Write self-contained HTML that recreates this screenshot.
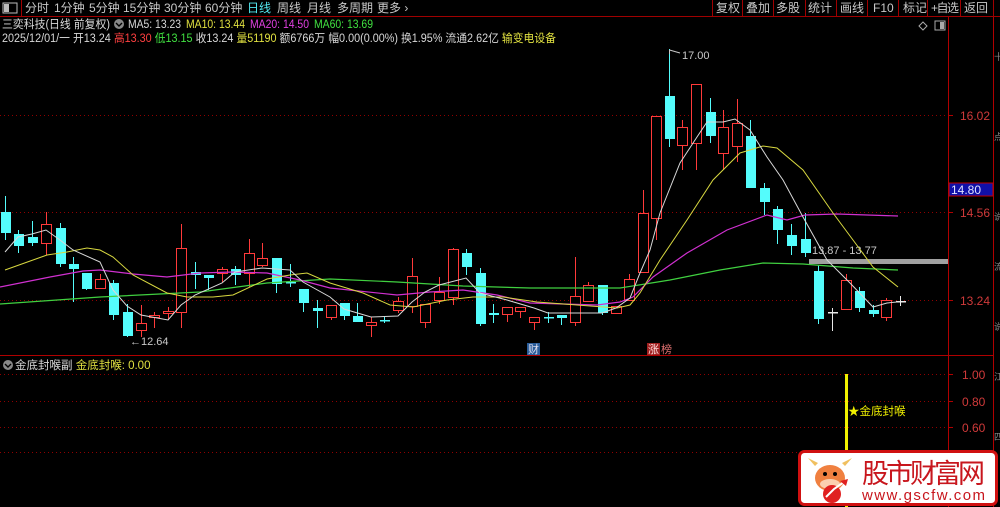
<!DOCTYPE html>
<html><head><meta charset="utf-8">
<style>
html,body{margin:0;padding:0;background:#000;width:1000px;height:507px;overflow:hidden;font-family:"Liberation Sans","Noto Sans CJK SC",sans-serif;}
#root{position:relative;width:1000px;height:507px;}
</style></head><body><div id="root">
<svg width="1000" height="507" style="position:absolute;left:0;top:0" xmlns="http://www.w3.org/2000/svg" font-family="Liberation Sans, Noto Sans CJK SC, sans-serif">
<rect x="0" y="0" width="1000" height="16" fill="#000"/>
<line x1="0" y1="16.5" x2="1000" y2="16.5" stroke="#a00000"/>
<rect x="3" y="3" width="14" height="10" fill="none" stroke="#bbb"/>
<rect x="4" y="4" width="5" height="8" fill="#bbb"/>
<line x1="21.5" y1="0" x2="21.5" y2="16" stroke="#a00000"/>
<g font-size="12" fill="#c8c8c8">
<text x="25" y="12">分时</text><text x="54" y="12">1分钟</text><text x="89" y="12">5分钟</text><text x="123" y="12">15分钟</text><text x="164" y="12">30分钟</text><text x="205" y="12">60分钟</text>
<text x="247" y="12" fill="#54e8f0">日线</text><text x="277" y="12">周线</text><text x="307" y="12">月线</text><text x="337" y="12">多周期</text><text x="377" y="12">更多 ›</text>
<text x="716" y="12">复权</text><text x="746" y="12">叠加</text><text x="776" y="12">多股</text><text x="808" y="12">统计</text><text x="840" y="12">画线</text><text x="873" y="12">F10</text><text x="903" y="12">标记</text><text x="931" y="12" textLength="28">+自选</text><text x="964" y="12">返回</text>
</g>
<g stroke="#a00000">
<line x1="712.5" y1="0" x2="712.5" y2="16"/><line x1="742.5" y1="0" x2="742.5" y2="16"/><line x1="773.5" y1="0" x2="773.5" y2="16"/><line x1="805.5" y1="0" x2="805.5" y2="16"/><line x1="836.5" y1="0" x2="836.5" y2="16"/><line x1="867.5" y1="0" x2="867.5" y2="16"/><line x1="898.5" y1="0" x2="898.5" y2="16"/><line x1="927.5" y1="0" x2="927.5" y2="16"/><line x1="960.5" y1="0" x2="960.5" y2="16"/><line x1="993.5" y1="0" x2="993.5" y2="16"/>
</g>
<g font-size="11.5">
<text x="2" y="28" fill="#d8d8d8" textLength="108" lengthAdjust="spacingAndGlyphs">三奕科技(日线 前复权)</text>
<circle cx="119" cy="24" r="5" fill="#888"/><path d="M116 23 L119 26 L122 23" stroke="#000" stroke-width="1.4" fill="none"/>
<text x="128" y="28" fill="#d8d8d8" textLength="53" lengthAdjust="spacingAndGlyphs">MA5: 13.23</text>
<text x="186" y="28" fill="#e0e040" textLength="59" lengthAdjust="spacingAndGlyphs">MA10: 13.44</text>
<text x="250" y="28" fill="#e040e0" textLength="59" lengthAdjust="spacingAndGlyphs">MA20: 14.50</text>
<text x="314" y="28" fill="#40e040" textLength="59" lengthAdjust="spacingAndGlyphs">MA60: 13.69</text>
<text x="2" y="42" fill="#d8d8d8" textLength="554" lengthAdjust="spacingAndGlyphs">2025/12/01/一 开13.24 <tspan fill="#ff4040">高13.30</tspan> <tspan fill="#40e040">低13.15</tspan> 收13.24 <tspan fill="#e0e040">量51190</tspan> 额6766万 幅0.00(0.00%) 换1.95% 流通2.62亿 <tspan fill="#e0e040">输变电设备</tspan></text>
</g>
<path d="M923 22 L927 26 L923 30 L919 26Z" fill="none" stroke="#aaa"/>
<rect x="935" y="21" width="10" height="9" fill="none" stroke="#aaa"/><rect x="940" y="22" width="4" height="7" fill="#aaa"/>
<line x1="948.5" y1="17" x2="948.5" y2="507" stroke="#b00000"/>
<line x1="993.5" y1="17" x2="993.5" y2="507" stroke="#b00000"/>
<line x1="0" y1="355.5" x2="993" y2="355.5" stroke="#b00000"/>
<g stroke="#900000" stroke-dasharray="1,3">
<line x1="0" y1="115.5" x2="948" y2="115.5"/><line x1="0" y1="212.5" x2="948" y2="212.5"/><line x1="0" y1="300.5" x2="948" y2="300.5"/>
<line x1="0" y1="374.5" x2="948" y2="374.5"/><line x1="0" y1="401.5" x2="948" y2="401.5"/><line x1="0" y1="427.5" x2="948" y2="427.5"/><line x1="0" y1="452.5" x2="948" y2="452.5"/>
</g>
<g stroke="#b00000"><line x1="948" y1="115.5" x2="953" y2="115.5"/><line x1="948" y1="212.5" x2="953" y2="212.5"/><line x1="948" y1="300.5" x2="953" y2="300.5"/><line x1="948" y1="374.5" x2="953" y2="374.5"/><line x1="948" y1="401.5" x2="953" y2="401.5"/><line x1="948" y1="427.5" x2="953" y2="427.5"/></g>
<g font-size="12" fill="#d03a3a">
<text x="960" y="120">16.02</text><text x="960" y="217">14.56</text><text x="960" y="305">13.24</text>
<text x="962" y="379">1.00</text><text x="962" y="406">0.80</text><text x="962" y="432">0.60</text>
</g>
<rect x="949" y="183" width="44" height="13" fill="#1010a8" stroke="#c00000"/>
<text x="951" y="194" font-size="12" fill="#e0e0ff">14.80</text>
<g font-size="9" fill="#888"><text x="994" y="60">十</text><text x="994" y="140">点</text><text x="994" y="220">说</text><text x="994" y="270">流</text><text x="994" y="330">说</text><text x="994" y="380">江</text><text x="994" y="440">四</text></g>
<rect x="809" y="259" width="139" height="5" fill="#a0a0a0"/>
<text x="812" y="254" font-size="11" fill="#c8c8c8">13.87 - 13.77</text>
<g id="candles"></g>
<polyline fill="none" stroke="#40d040" stroke-width="1.2" points="0,304 100,297 200,292 267,283 330,279 397,282 463,286 530,288 597,288 620,288 670,280 720,270 763,263 803,264 853,268 898,270"/>
<polyline fill="none" stroke="#d030d0" stroke-width="1.2" points="0,287 50,277 83,271 100,270 133,274 167,277 200,273 233,272 267,273 300,280 330,288 397,295 430,292 463,290 497,295 530,303 563,304 597,305 620,302 633,297 653,277 687,253 727,230 767,215 787,220 805,215 837,214 898,216"/>
<polyline fill="none" stroke="#d8d840" stroke-width="1" points="5,270 33,260 47,255 67,252 87,248 100,250 113,257 133,275 167,293 187,297 213,297 233,295 267,279 290,275 307,273 330,283 363,293 390,305 413,307 447,300 473,297 503,297 537,302 577,305 617,308 630,305 640,293 660,260 687,220 713,180 740,153 763,146 777,148 803,170 833,213 853,240 873,267 898,287"/>
<polyline fill="none" stroke="#d8d8d8" stroke-width="1" points="5,252 18,237 32,234 46,230 60,240 73,250 100,262 113,290 127,306 141,315 168,320 181,305 195,295 222,283 235,272 262,268 290,270 303,282 330,297 344,309 371,317 398,316 412,302 425,292 439,285 466,278 480,293 507,300 534,308 548,313 575,313 602,313 616,308 630,298 640,273 650,250 660,213 680,163 697,137 707,122 723,122 735,119 750,130 767,157 783,180 803,217 827,260 850,283 873,307 887,303 897,302"/>
<text x="130" y="345" font-size="11" fill="#c8c8c8">←12.64</text>
<path d="M669.5 50 L669.5 54 M669.5 50 L680 53" stroke="#c8c8c8" fill="none"/>
<text x="682" y="59" font-size="11" fill="#c8c8c8">17.00</text>
<rect x="527" y="343" width="13" height="12" fill="#2a5d9a"/><text x="528" y="353" font-size="11" fill="#dde">财</text>
<rect x="647" y="343" width="13" height="12" fill="#a02020"/><text x="648" y="353" font-size="11" fill="#fdd">涨</text>
<text x="661" y="353" font-size="11" fill="#e07070">榜</text>
<circle cx="8" cy="365" r="5" fill="#888"/><path d="M5 364 L8 367 L11 364" stroke="#000" stroke-width="1.4" fill="none"/>
<text x="15" y="369" font-size="11.5" fill="#d8d8d8">金底封喉副 <tspan fill="#e0e040">金底封喉: 0.00</tspan></text>
<rect x="845" y="374" width="3" height="133" fill="#f0f000"/>
<text x="848" y="415" font-size="11.5" fill="#f0f000">★金底封喉</text>
<rect x="799.5" y="451.5" width="197" height="53" rx="5" fill="#fff" stroke="#d01010" stroke-width="3"/>
<ellipse cx="830" cy="478" rx="15" ry="13" fill="#f08040"/>
<path d="M815 466 L808 458 L818 463Z M845 466 L852 458 L842 463Z" fill="#f0c060"/>
<ellipse cx="830" cy="484" rx="10" ry="5" fill="#fbd0b0"/>
<circle cx="825" cy="474" r="2" fill="#000"/><circle cx="835" cy="474" r="2" fill="#000"/>
<circle cx="832" cy="494" r="9" fill="#e02020"/><path d="M826 497 L834 489 L844 482" stroke="#fff" stroke-width="2" fill="none"/><path d="M840 481 L848 479 L846 486Z" fill="#e02020"/>
<text x="862" y="483" font-size="27" fill="#c8161d" font-family="Noto Sans CJK SC, sans-serif" textLength="123">股市财富网</text>
<text x="862" y="500" font-size="15" fill="#c8161d" textLength="123">www.gscfw.com</text>
</svg>
<script>
var d=[[5,'c',212,233,196,240],[18,'c',234,246,230,253],[32,'c',237,243,221,246],[46,'r',224,243,212,255],[60,'c',228,264,223,267],[73,'c',264,269,257,302],[86,'c',273,289,273,290],[100,'r',279,288,274,288],[113,'c',283,315,280,320],[127,'c',312,336,304,337],[141,'r',323,330,305,337],[154,'r',315,317,312,328],[168,'r',311,313,307,320],[181,'r',248,312,224,328],[195,'c',272,275,262,289],[208,'c',275,278,275,290],[222,'r',269,273,267,282],[235,'c',269,275,266,285],[249,'r',253,273,239,287],[262,'r',258,265,243,267],[276,'c',258,284,258,293],[290,'c',282,283,264,287],[303,'c',289,303,289,312],[317,'c',308,311,300,328],[331,'r',305,317,305,320],[344,'c',303,316,303,320],[357,'c',316,322,303,322],[371,'r',322,325,317,337],[384,'c',320,321,317,323],[398,'r',301,310,297,313],[412,'r',276,306,258,313],[425,'r',304,322,304,328],[439,'r',292,300,277,304],[453,'r',249,297,248,305],[466,'c',253,267,249,275],[480,'c',273,324,268,326],[493,'c',313,315,304,323],[507,'r',307,314,307,322],[520,'r',307,311,307,318],[534,'r',317,322,317,330],[548,'c',317,318,312,323],[561,'c',315,318,315,325],[575,'r',296,322,257,326],[588,'r',285,301,282,301],[602,'c',285,313,285,315],[616,'r',306,313,306,313],[629,'r',279,300,274,300],[643,'r',213,272,190,272],[656,'r',116,218,116,240],[669,'c',96,139,49,147],[682,'r',127,145,120,170],[696,'r',84,143,84,170],[710,'c',112,136,98,143],[723,'r',127,153,110,170],[737,'r',123,146,99,162],[750,'c',136,188,120,188],[764,'c',188,202,183,215],[777,'c',209,230,206,244],[791,'c',235,246,224,255],[805,'c',239,253,213,257],[818,'c',271,319,265,324],[832,'w',312,313,308,331],[846,'r',280,309,274,309],[859,'c',291,308,287,312],[873,'c',310,314,305,317],[886,'r',300,317,298,321],[900,'w',301,302,296,306]];
var s='';d.forEach(function(c){var x=c[0],col=c[1]=='c'?'#54fcfc':(c[1]=='r'?'#ff3a3a':'#e8e8e8');
s+='<line x1="'+(x+.5)+'" y1="'+c[4]+'" x2="'+(x+.5)+'" y2="'+c[5]+'" stroke="'+col+'"/>';
var h=Math.max(1,c[3]-c[2]);
if(c[1]=='r')s+='<rect x="'+(x-4.5)+'" y="'+(c[2]+.5)+'" width="10" height="'+h+'" fill="#000" stroke="'+col+'"/>';
else s+='<rect x="'+(x-4)+'" y="'+c[2]+'" width="10" height="'+(h<2?1.5:h)+'" fill="'+col+'"/>';});
document.getElementById('candles').innerHTML=s;
</script>
</div></body></html>
